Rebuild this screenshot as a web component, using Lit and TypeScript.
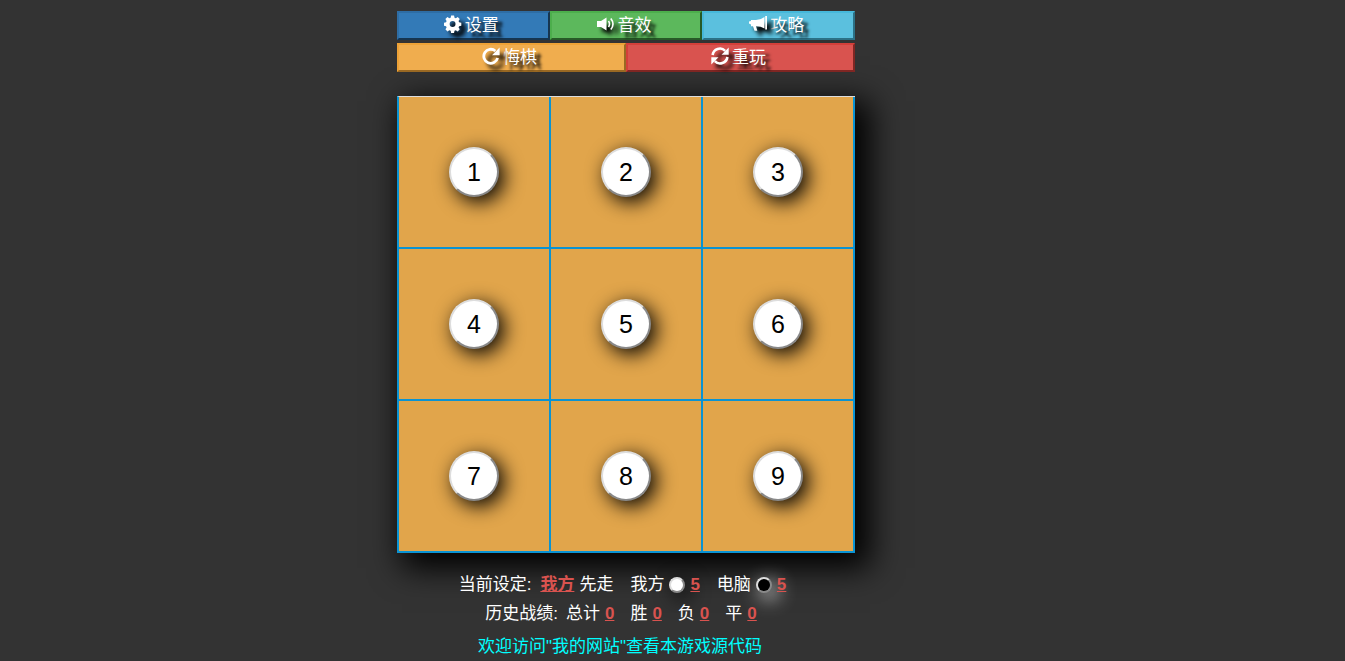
import { LitElement, html, css, svg } from "lit";
import { customElement, state } from "lit/decorators.js";

const icons = {
  cog: svg`<path fill-rule="evenodd" d="M7.4 0.5h3.2l.5 2.4 1.4.6 2.1-1.3 2.2 2.2-1.3 2.1.6 1.4 2.4.5v3.2l-2.4.5-.6 1.4 1.3 2.1-2.2 2.2-2.1-1.3-1.4.6-.5 2.4H7.4l-.5-2.4-1.4-.6-2.1 1.3-2.2-2.2 1.3-2.1-.6-1.4-2.4-.5V8.4l2.4-.5.6-1.4L1.2 4.4l2.2-2.2 2.1 1.3 1.4-.6zM9 6.6a3.200 3.200 0 1 0 0 6.400 3.200 3.200 0 0 0 0-6.400z" transform="translate(.3 0) scale(.92)"/>`,
  volume: svg`<path d="M0 6h4L9.5 2.5v13L4 12H0z"/><path d="M11.5 6q2 3 0 6M13.800 3.500q4.400 5.500 0 11" fill="none" stroke="currentColor" stroke-width="1.600"/>`,
  bullhorn: svg`<path d="M15.500 2v11.500Q12 11.200 7 11.200l1.300 4.600H5.500L4 11.200H2V9.500L0 8.500V6.500l2-.6V5h5Q12 4.800 15.500 2zM16.200 1H18v13.500h-1.800z"/>`,
  repeat: svg`<path d="M13.400 4A7 7 0 1 0 15.600 11" fill="none" stroke="currentColor" stroke-width="2.800"/><path d="M17.600.6v7.600H10z"/>`,
  refresh: svg`<path d="M1.600 8A7.400 7.400 0 0 1 14.200 3.800M16.400 10A7.400 7.400 0 0 1 3.800 14.200" fill="none" stroke="currentColor" stroke-width="2.600"/><path d="M17.700.5v7.200h-7.200zM.3 17.500v-7.200h7.200z"/>`,
};

@customElement("app-root")
export class AppRoot extends LitElement {
  @state() private pieces = [1, 2, 3, 4, 5, 6, 7, 8, 9];
  @state() private scores = [["总计", 0], ["胜", 0], ["负", 0], ["平", 0]];

  static styles = css`
    :host {
      display: block;
      box-sizing: border-box;
      min-height: 100vh;
      padding: 11px 93px 0 0;
      background: #333;
      color: #fff;
      font: 17px/24px "Liberation Sans", "Noto Sans CJK SC", sans-serif;
    }
    .game {
      max-width: 458px;
      margin: 0 auto;
    }
    .toolbar {
      display: flex;
      margin-bottom: 3px;
    }
    .btn {
      flex: 1;
      display: flex;
      align-items: center;
      justify-content: center;
      gap: 3px;
      height: 29px;
      padding: 0 4px 0 0;
      border: 2px outset;
      color: #fff;
      font: inherit;
      text-shadow: 5px 5px 3px #000;
      cursor: pointer;
    }
    .icon {
      width: 18px;
      height: 18px;
      margin-bottom: 3px;
      fill: currentColor;
      filter: drop-shadow(5px 5px 2px #000);
    }
    .primary { background: #337ab7; border-color: #2e6da4; }
    .success { background: #5cb85c; border-color: #4cae4c; }
    .info { background: #5bc0de; border-color: #46b8da; }
    .warning { background: #f0ad4e; border-color: #eea236; }
    .danger { background: #d9534f; border-color: #d43f3a; }
    .board {
      display: grid;
      grid-template-columns: repeat(3, 1fr);
      box-sizing: border-box;
      margin-top: 24px;
      border-left: 2px solid #0a93d3;
      border-top: 1px solid #ddd;
      background: #e1a54b;
      box-shadow: 10px 10px 30px 5px #000;
    }
    .cell {
      display: flex;
      align-items: center;
      justify-content: center;
      box-sizing: border-box;
      aspect-ratio: 1;
      border-right: 2px solid #0a93d3;
      border-bottom: 2px solid #0a93d3;
    }
    .piece {
      width: 50px;
      height: 50px;
      padding: 0;
      border: 2px outset #ddd;
      border-radius: 50%;
      background: #fff;
      color: #000;
      font: 25px/46px "Liberation Sans", sans-serif;
      box-shadow: 5px 5px 20px #000;
      cursor: pointer;
    }
    .line {
      display: flex;
      justify-content: center;
      align-items: center;
      gap: 16px;
      margin-top: 5px;
      padding-right: 10px;
    }
    .settings {
      gap: 17px;
      margin-top: 20px;
      padding-right: 7px;
    }
    .group {
      display: flex;
      align-items: center;
      gap: 5px;
    }
    .label { margin-right: -8px; }
    .value {
      color: #d9534f;
      font-weight: bold;
      text-decoration: underline;
    }
    .stone {
      box-sizing: border-box;
      width: 16px;
      height: 16px;
      border: 2px outset #ddd;
      border-radius: 50%;
    }
    .white { background: #fff; box-shadow: 5px 5px 20px #000; }
    .black { background: #000; box-shadow: 5px 5px 20px #fff; }
    .source {
      display: block;
      margin-top: 9px;
      padding-right: 12px;
      color: #0ff;
      text-align: center;
      text-decoration: none;
    }
  `;

  private button(kind: string, icon: keyof typeof icons, text: string) {
    return html`<button type="button" class="btn ${kind}">
      <svg class="icon" viewBox="0 0 18 18" aria-hidden="true">${icons[icon]}</svg><span>${text}</span>
    </button>`;
  }

  render() {
    return html`<main class="game">
      <div class="toolbar">
        ${this.button("primary", "cog", "设置")}
        ${this.button("success", "volume", "音效")}
        ${this.button("info", "bullhorn", "攻略")}
      </div>
      <div class="toolbar">
        ${this.button("warning", "repeat", "悔棋")}
        ${this.button("danger", "refresh", "重玩")}
      </div>
      <div class="board">
        ${this.pieces.map((n) => html`<div class="cell"><button type="button" class="piece">${n}</button></div>`)}
      </div>
      <div class="line settings">
        <span class="label">当前设定:</span>
        <span class="group"><span class="value">我方</span>先走</span>
        <span class="group">我方<i class="stone white"></i><span class="value">5</span></span>
        <span class="group">电脑<i class="stone black"></i><span class="value">5</span></span>
      </div>
      <div class="line">
        <span class="label">历史战绩:</span>
        ${this.scores.map(([name, n]) => html`<span class="group">${name}<span class="value">${n}</span></span>`)}
      </div>
      <a class="source" href="#">欢迎访问"我的网站"查看本游戏源代码</a>
    </main>`;
  }
}
